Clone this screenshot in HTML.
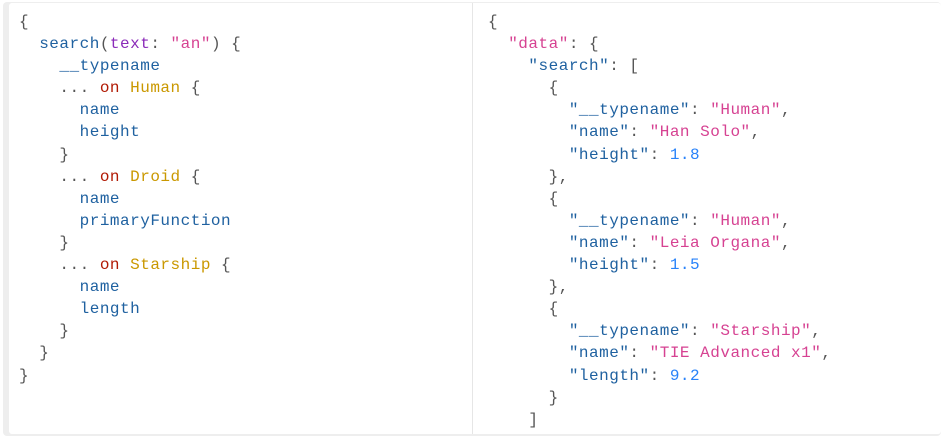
<!DOCTYPE html>
<html><head><style>
body{margin:0;width:942px;height:436px;overflow:hidden;background:#fff;position:relative}
.outer{position:absolute;left:3px;top:2px;width:938px;height:434px;background:#eeeeee;border-radius:4px}
.p{position:absolute;top:3px;height:431px;background:#fff;overflow:hidden}
pre{margin:0;font-family:"Liberation Mono",monospace;font-size:16px;letter-spacing:0.5px;line-height:22.1px;color:#555;position:absolute;top:8px}
.k{color:#1f61a0}.s{color:#d64292}.n{color:#2882f9}.kw{color:#b11a04}.t{color:#ca9800}.a{color:#8b2bb9}
</style></head><body>
<div class="outer"></div>
<div class="p" style="left:9px;width:463px;border-radius:3px 0 0 3px"><pre style="left:10px">{
  <span class="k">search</span>(<span class="a">text</span>: <span class="s">"an"</span>) {
    <span class="k">__typename</span>
    ... <span class="kw">on</span> <span class="t">Human</span> {
      <span class="k">name</span>
      <span class="k">height</span>
    }
    ... <span class="kw">on</span> <span class="t">Droid</span> {
      <span class="k">name</span>
      <span class="k">primaryFunction</span>
    }
    ... <span class="kw">on</span> <span class="t">Starship</span> {
      <span class="k">name</span>
      <span class="k">length</span>
    }
  }
}</pre></div>
<div class="p" style="left:472px;width:468px;border-left:1px solid #e6e6e6;border-radius:0 3px 3px 0"><pre style="left:15px">{
  <span class="s">"data"</span>: {
    <span class="k">"search"</span>: [
      {
        <span class="k">"__typename"</span>: <span class="s">"Human"</span>,
        <span class="k">"name"</span>: <span class="s">"Han Solo"</span>,
        <span class="k">"height"</span>: <span class="n">1.8</span>
      },
      {
        <span class="k">"__typename"</span>: <span class="s">"Human"</span>,
        <span class="k">"name"</span>: <span class="s">"Leia Organa"</span>,
        <span class="k">"height"</span>: <span class="n">1.5</span>
      },
      {
        <span class="k">"__typename"</span>: <span class="s">"Starship"</span>,
        <span class="k">"name"</span>: <span class="s">"TIE Advanced x1"</span>,
        <span class="k">"length"</span>: <span class="n">9.2</span>
      }
    ]
  }
}</pre></div>
</body></html>
